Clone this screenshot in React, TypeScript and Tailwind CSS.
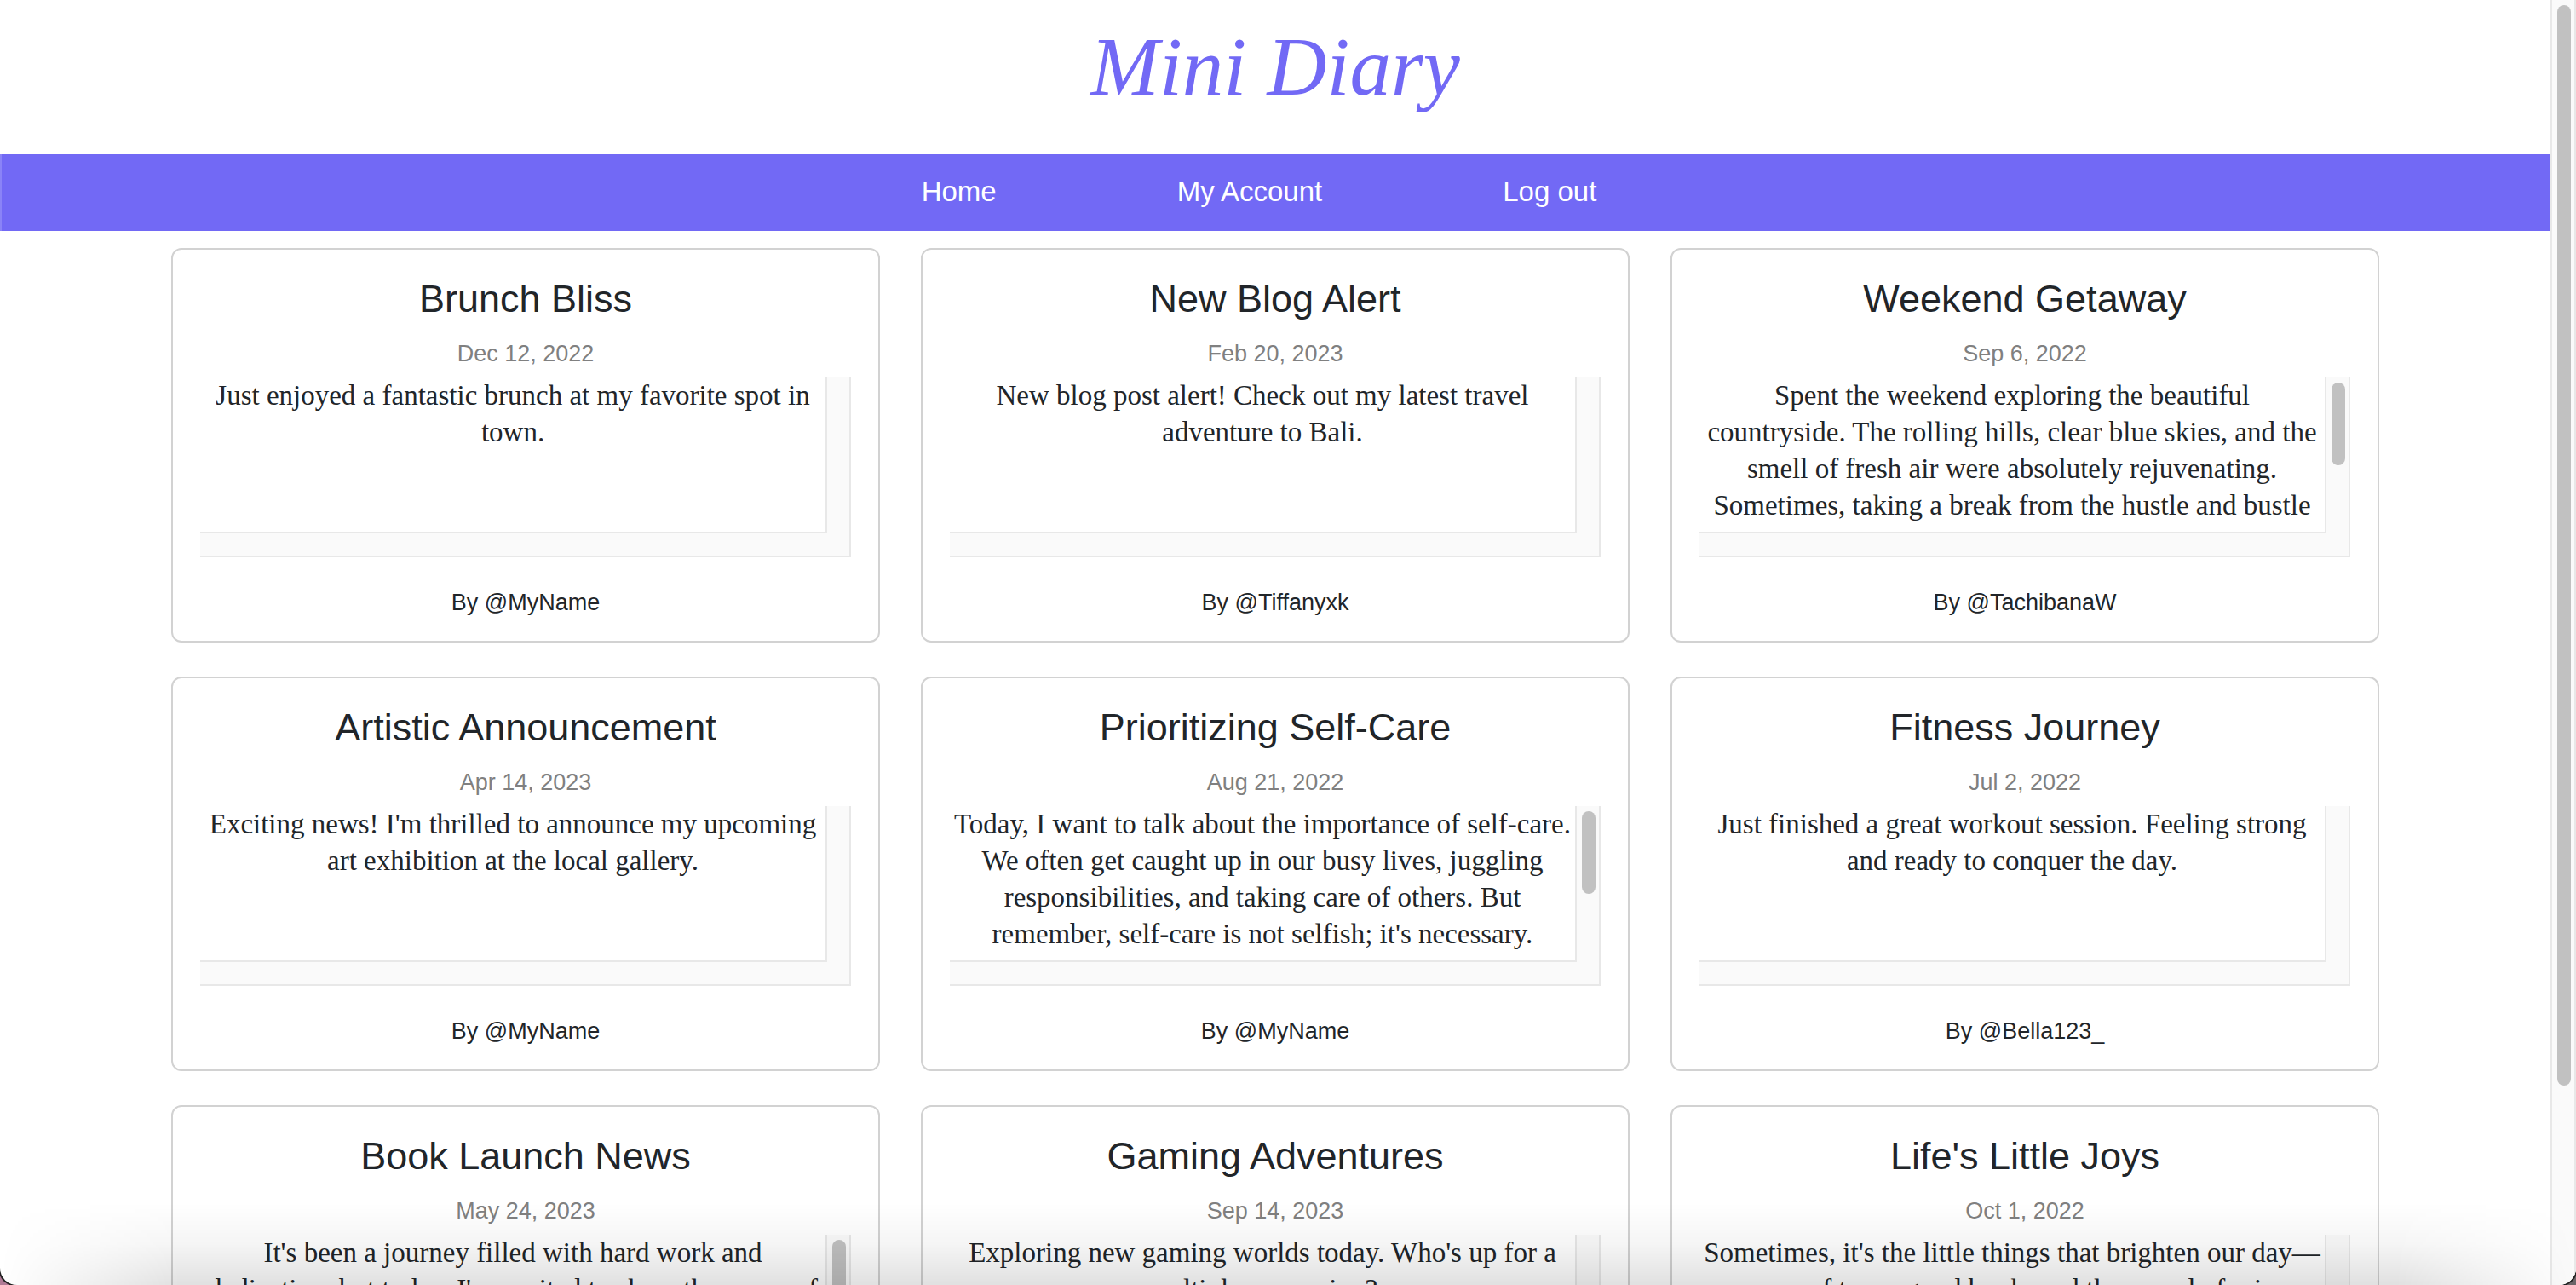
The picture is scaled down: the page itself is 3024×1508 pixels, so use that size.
type Entry = { title: string; date: string; body: string; author: string; scrolls?: boolean };

const entries: Entry[] = [
  { title: "Brunch Bliss", date: "Dec 12, 2022", body: "Just enjoyed a fantastic brunch at my favorite spot in town.", author: "@MyName" },
  { title: "New Blog Alert", date: "Feb 20, 2023", body: "New blog post alert! Check out my latest travel adventure to Bali.", author: "@Tiffanyxk" },
  {
    title: "Weekend Getaway",
    date: "Sep 6, 2022",
    body: "Spent the weekend exploring the beautiful\ncountryside. The rolling hills, clear blue skies, and the smell of fresh air were absolutely rejuvenating. Sometimes, taking a break from the hustle and bustle",
    author: "@TachibanaW",
    scrolls: true,
  },
  { title: "Artistic Announcement", date: "Apr 14, 2023", body: "Exciting news! I'm thrilled to announce my upcoming art exhibition at the local gallery.", author: "@MyName" },
  {
    title: "Prioritizing Self-Care",
    date: "Aug 21, 2022",
    body: "Today, I want to talk about the importance of self-care. We often get caught up in our busy lives, juggling responsibilities, and taking care of others. But remember, self-care is not selfish; it's necessary.",
    author: "@MyName",
    scrolls: true,
  },
  { title: "Fitness Journey", date: "Jul 2, 2022", body: "Just finished a great workout session. Feeling strong and ready to conquer the day.", author: "@Bella123_" },
  {
    title: "Book Launch News",
    date: "May 24, 2023",
    body: "It's been a journey filled with hard work and dedication, but today, I'm excited to share the cover of",
    author: "@MyName",
    scrolls: true,
  },
  { title: "Gaming Adventures", date: "Sep 14, 2023", body: "Exploring new gaming worlds today. Who's up for a multiplayer session?", author: "@MyName" },
  { title: "Life's Little Joys", date: "Oct 1, 2022", body: "Sometimes, it's the little things that brighten our day—\na cup of tea, a good book, and the sound of rain.", author: "@MyName" },
];

function Card({ entry }: { entry: Entry }) {
  return (
    <article className="rounded-xl border-2 border-[#d2d2d2] px-8 pt-[30px] pb-6 text-center text-[#212529]">
      <h2 className="text-[45px] leading-[56px]">{entry.title}</h2>
      <p className="mt-4 mb-2 text-[27px] leading-[40px] text-[#808080]">{entry.date}</p>
      <div className="flex h-[181px]">
        <p className="min-w-0 flex-1 overflow-hidden font-['Liberation_Serif',serif] text-[33px] leading-[43px] whitespace-pre-line">{entry.body}</p>
        <div className="w-[30px] border-x-2 border-[#e8e8e8] bg-[#fafafa] px-1.5 pt-1.5">
          {entry.scrolls && <div className="h-[97px] w-4 rounded-full bg-[#c1c1c1]" />}
        </div>
      </div>
      <div className="flex h-[30px] border-b-2 border-[#e8e8e8] bg-[#fafafa]">
        <div className="h-0.5 flex-1 bg-[#e8e8e8]" />
        <div className="w-7 border-r-2 border-[#e8e8e8]" />
      </div>
      <p className="mt-8 text-[27px] leading-[42px]">By {entry.author}</p>
    </article>
  );
}

export default function App() {
  return (
    <div className="bg-linear-to-r from-[#b07a95] to-[#6b6468]">
      <div className="relative flex h-screen overflow-hidden rounded-b-[20px] bg-white font-['Liberation_Sans',sans-serif] shadow-[0_0_0_2px_#222222]">
        <div className="min-w-0 flex-1">
          <header className="pt-6 pb-[47px] text-center">
            <h1 className="font-['Apple_Chancery','Liberation_Serif',serif] text-[97px] leading-[110px] text-[#7269f5] italic">Mini Diary</h1>
          </header>
          <nav className="flex h-[90px] items-center justify-center gap-53 border-l-2 border-[#8a83f7] bg-[#7269f5] pr-10 pb-0.5 text-[33px] text-white">
            <a href="#home">Home</a>
            <a href="#account">My Account</a>
            <a href="#logout">Log out</a>
          </nav>
          <main className="mx-auto mt-5 grid max-w-[2640px] grid-cols-3 gap-x-12 gap-y-10 px-6">
            {entries.map((entry) => (
              <Card key={entry.title} entry={entry} />
            ))}
          </main>
        </div>
        <div className="w-[30px] border-x-2 border-[#e8e8e8] bg-[#fafafa] px-1.5 pt-1.5">
          <div className="h-[1268px] w-4 rounded-full bg-[#c1c1c1]" />
        </div>
        <div className="pointer-events-none absolute inset-x-0 bottom-0 h-24 bg-linear-to-t from-black/12 via-black/4 to-transparent mask-x-from-93% mask-x-to-100%" />
      </div>
    </div>
  );
}
